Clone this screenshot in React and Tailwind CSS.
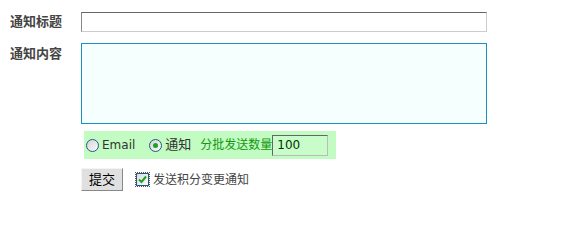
import React from "react";

const cjk = { fontFamily: '"DejaVu Sans", "Noto Sans CJK SC", sans-serif' };

function Radio({ checked }) {
  return (
    <span className="flex h-[13px] w-[13px] items-center justify-center rounded-full border border-[#1c5a8c] bg-gradient-to-br from-[#d4d4d4] to-[#fbfbfb]">
      {checked && <span className="h-[5px] w-[5px] rounded-full bg-[#21a121]" />}
    </span>
  );
}

export default function App() {
  return (
    <div className="h-[212px] w-[570px] bg-white pl-[10px] pt-[12px]" style={cjk}>
      {/* title row */}
      <div className="flex">
        <div className="flex w-[71px] items-center text-[13px] font-bold text-[#444]">
          通知标题
        </div>
        <input
          className="h-[20px] w-[406px] border border-t-[#666] border-l-[#888] border-r-[#ccc] border-b-[#ccc] bg-white outline-none"
          defaultValue=""
        />
      </div>

      {/* content row */}
      <div className="mt-[11px] flex">
        <div className="w-[71px] pt-[1px] text-[13px] font-bold text-[#444]">
          通知内容
        </div>
        <textarea
          className="h-[81px] w-[406px] resize-none border border-[#1a92c0] bg-[#f5fffe] outline-none"
          defaultValue=""
        />
      </div>

      {/* send options */}
      <div className="ml-[74px] mt-[7px] flex h-[28px] w-[252px] items-center bg-[#c2fcc2] pl-[2px] text-[12px]">
        <Radio />
        <span className="ml-[3px] text-[#333]">Email</span>
        <span className="ml-[14px]">
          <Radio checked />
        </span>
        <span className="ml-[3px] text-[13px] text-[#333]">通知</span>
        <span className="ml-[9px] text-[#119911]">分批发送数量</span>
        <input
          className="h-[21px] w-[56px] border border-t-[#666] border-l-[#666] border-r-[#bbb] border-b-[#bbb] bg-[#c8fcc8] px-[4px] text-[12px] text-[#003300] outline-none"
          defaultValue="100"
        />
      </div>

      {/* submit */}
      <div className="mt-[9px] flex items-center">
        <button className="ml-[71px] h-[23px] w-[42px] border border-t-[#f4f4f4] border-l-[#f4f4f4] border-r-[#888] border-b-[#888] bg-[#e0e0e0] text-[13px] text-black">
          提交
        </button>
        <span className="ml-[12px] flex h-[15px] w-[15px] items-center justify-center border border-dotted border-[#555]">
          <span className="flex h-[13px] w-[13px] items-center justify-center border border-[#1c5a8c] bg-gradient-to-br from-[#dcdcdc] to-[#fbfbfb]">
            <svg width="9" height="9" viewBox="0 0 9 9">
              <path d="M1 4.5 L3.5 7 L8 1.5" fill="none" stroke="#21a121" strokeWidth="2" />
            </svg>
          </span>
        </span>
        <span className="ml-[3px] text-[12px] text-[#444]">发送积分变更通知</span>
      </div>
    </div>
  );
}
